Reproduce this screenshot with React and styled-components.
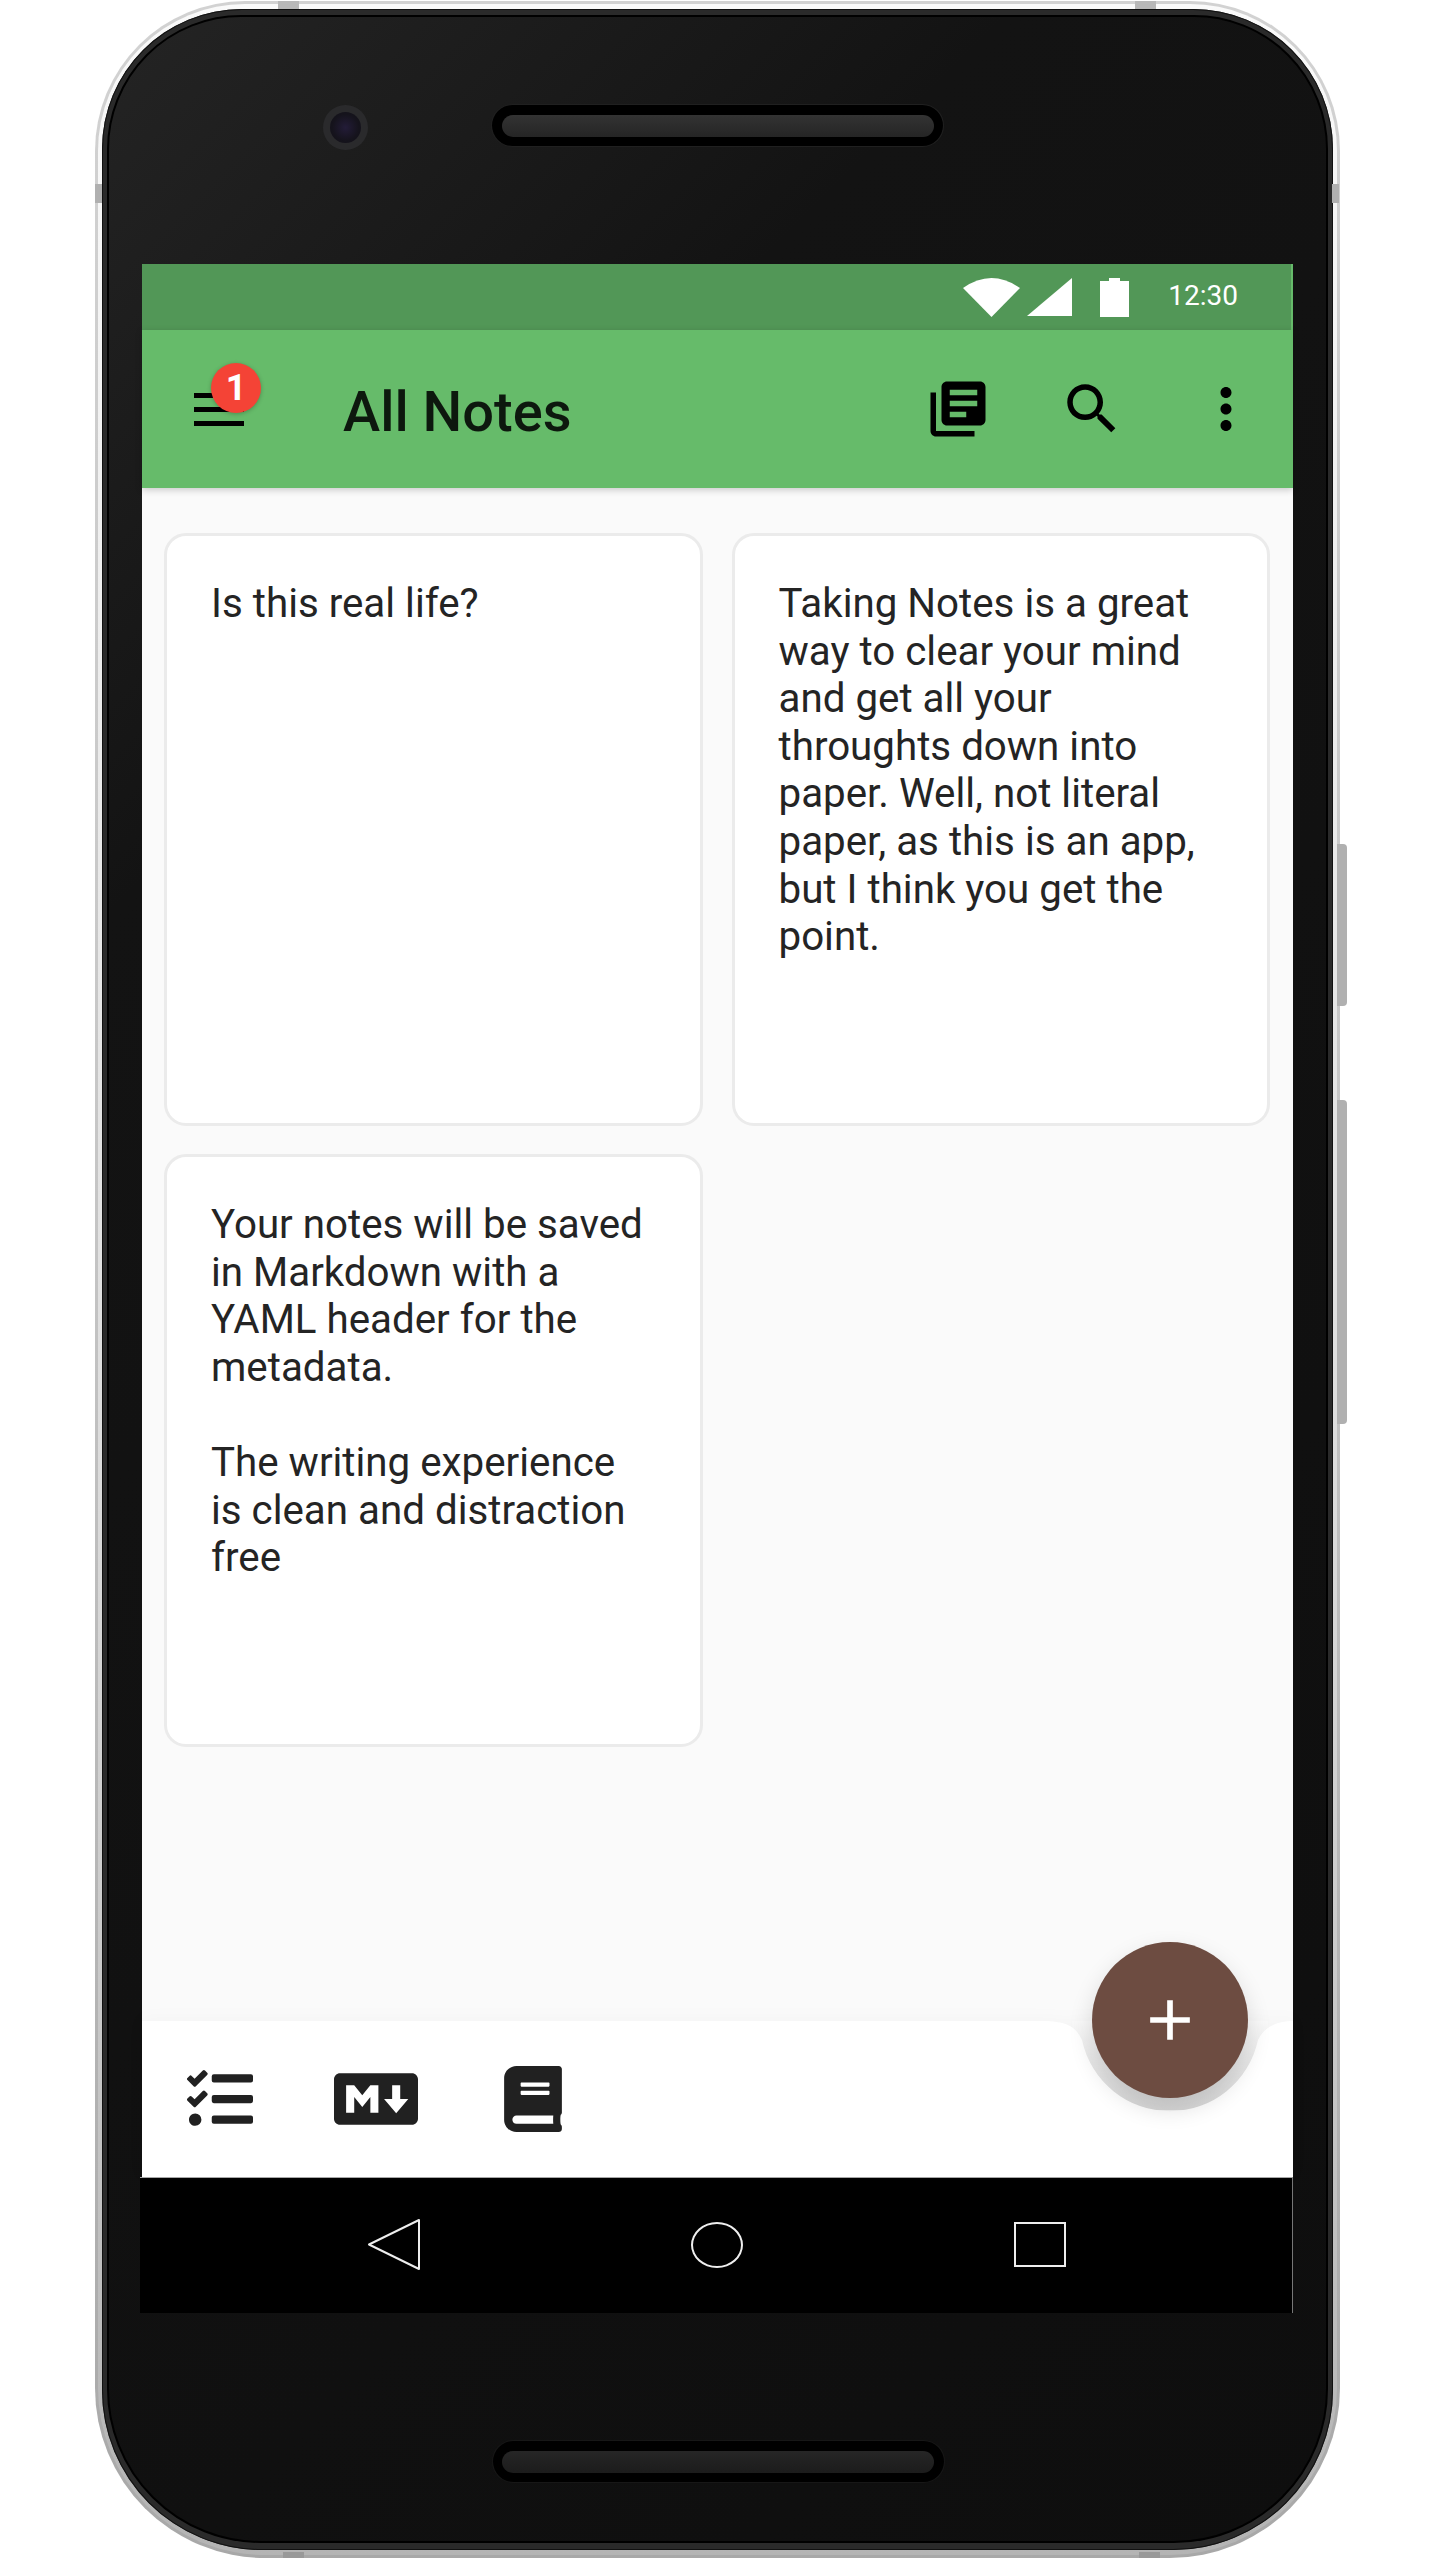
import React from 'react';
import styled, { createGlobalStyle } from 'styled-components';
import { FaTasks, FaMarkdown, FaBook } from 'react-icons/fa';

const GlobalStyle = createGlobalStyle`
  * { box-sizing: border-box; }
  html, body { margin: 0; padding: 0; background: #fff; }
  body { font-family: Roboto, "Liberation Sans", sans-serif; }
`;

const notes = [
  'Is this real life?',
  'Taking Notes is a great way to clear your mind and get all your throughts down into paper. Well, not literal paper, as this is an app, but I think you get the point.',
  'Your notes will be saved in Markdown with a YAML header for the metadata.\n\nThe writing experience is clean and distraction free',
];

const MaterialIcon = ({ d }) => (
  <IconSvg viewBox="0 0 24 24" aria-hidden="true">
    <path d={d} />
  </IconSvg>
);

const App = () => (
  <>
    <GlobalStyle />
    <Page>
      <Shell>
        <TopTab $left={183} />
        <TopTab $left={1040} />
        <BottomTab $left={188} />
        <BottomTab $left={1044} />
        <SideTab $side="left" />
        <SideTab $side="right" />
        <SideKey $top={843} $height={162} />
        <SideKey $top={1099} $height={324} />
        <ShellInner>
          <Rim>
            <Bezel>
              <BezelTop>
                <Camera><Lens /></Camera>
                <Speaker><Grille /></Speaker>
              </BezelTop>
              <Screen>
                <StatusBar>
                  <svg width="57" height="39" viewBox="0 0 57 39"><path d="M0 10Q28.5-10 57 10L28.5 39Z" fill="#fff" /></svg>
                  <SignalSvg width="45" height="38" viewBox="0 0 45 38"><path d="M0 38L45 0V38Z" fill="#fff" /></SignalSvg>
                  <BatterySvg width="29" height="39" viewBox="0 0 29 39"><path d="M9 0H20V3H29V39H0V3H9Z" fill="#fff" /></BatterySvg>
                  <Clock>12:30</Clock>
                </StatusBar>
                <AppBar>
                  <MenuButton>
                    <svg width="50" height="33" viewBox="0 0 50 33">
                      <path d="M0 0H50V5H0ZM0 14H50V19H0ZM0 28H50V33H0Z" />
                    </svg>
                    <Badge>1</Badge>
                  </MenuButton>
                  <Title>All Notes</Title>
                  <Actions>
                    <MaterialIcon d="M4 6H2v14c0 1.1.9 2 2 2h14v-2H4V6zm16-4H8c-1.1 0-2 .9-2 2v12c0 1.1.9 2 2 2h12c1.1 0 2-.9 2-2V4c0-1.1-.9-2-2-2zm-1 9H9V9h10v2zm-4 4H9v-2h6v2zm4-8H9V5h10v2z" />
                    <MaterialIcon d="M15.5 14h-.79l-.28-.27C15.41 12.59 16 11.11 16 9.5 16 5.91 13.09 3 9.5 3S3 5.91 3 9.5 5.91 16 9.5 16c1.61 0 3.09-.59 4.23-1.57l.27.28v.79l5 4.99L20.49 19l-4.99-5zm-6 0C7.01 14 5 11.99 5 9.5S7.01 5 9.5 5 14 7.01 14 9.5 11.99 14 9.5 14z" />
                    <MaterialIcon d="M12 8c1.1 0 2-.9 2-2s-.9-2-2-2-2 .9-2 2 .9 2 2 2zm0 2c-1.1 0-2 .9-2 2s.9 2 2 2 2-.9 2-2-.9-2-2-2zm0 6c-1.1 0-2 .9-2 2s.9 2 2 2 2-.9 2-2-.9-2-2-2z" />
                  </Actions>
                </AppBar>
                <Main>
                  <NoteGrid>
                    {notes.map((note) => (
                      <NoteCard key={note}>{note}</NoteCard>
                    ))}
                  </NoteGrid>
                </Main>
                <BottomBar>
                  <BarShape width="1151" height="156" viewBox="0 0 1151 156">
                    <defs>
                      <linearGradient id="notchShade" x1="0" y1="0" x2="0" y2="1">
                        <stop offset="0" stopColor="#f9f9f9" />
                        <stop offset="0.45" stopColor="#e8e8e8" />
                        <stop offset="1" stopColor="#d8d8d8" />
                      </linearGradient>
                    </defs>
                    <path d="M930 0H1126V89H930Z" fill="url(#notchShade)" />
                    <path d="M0 0H900C925 0 934 6 940 19A90 90 0 0 0 1116 19C1122 6 1135 0 1151 0V156H0Z" fill="#fff" />
                  </BarShape>
                  <BarButton><FaTasks size={66} /></BarButton>
                  <BarButton><FaMarkdown size={84} /></BarButton>
                  <BarButton $nudge={1}><FaBook size={66} /></BarButton>
                  <Fab>
                    <FabIcon viewBox="0 0 24 24"><path d="M19 13h-6v6h-2v-6H5v-2h6V5h2v6h6v2z" /></FabIcon>
                  </Fab>
                </BottomBar>
                <NavBar>
                  <svg width="54" height="53" viewBox="0 0 54 53">
                    <path d="M52 2V51L2 26.5Z" fill="none" stroke="#eee" strokeWidth="2" strokeLinejoin="round" />
                  </svg>
                  <HomeKey />
                  <RecentKey />
                </NavBar>
              </Screen>
              <BezelBottom>
                <Speaker $dim><Grille $dim /></Speaker>
              </BezelBottom>
            </Bezel>
          </Rim>
        </ShellInner>
      </Shell>
    </Page>
  </>
);

const Page = styled.div`
  width: 1440px;
  height: 2560px;
  padding: 1px 0 0 95px;
  overflow: hidden;
  background: #fff;
`;

const Shell = styled.div`
  position: relative;
  width: 1245px;
  padding: 3px;
  border-radius: 150px 150px 170px 170px;
  background: linear-gradient(to bottom, #d2d2d2 0%, #c6c6c6 45%, #a8a8a8 100%);
`;

const ShellInner = styled.div`
  padding: 5px 4px;
  border-radius: 147px 147px 167px 167px;
  background: linear-gradient(to bottom, #fafafa 0%, #dedede 55%, #b4b4b4 100%);
`;

const Rim = styled.div`
  padding: 6px 5px 7px;
  border-radius: 140px 140px 160px 160px;
  background: #2a2a2a;
  box-shadow: inset 0 0 0 1px #111;
`;

const Bezel = styled.div`
  padding: 0 32px 0 33px;
  border: 2px solid #000;
  border-radius: 134px 134px 154px 154px;
  background: linear-gradient(135deg, #242424 0%, #131313 24%, #0e0e0e 100%);
`;

const BezelTop = styled.div`
  display: flex;
  align-items: flex-start;
  gap: 124px;
  height: 247px;
  padding: 88px 0 0 181px;
`;

const BezelBottom = styled.div`
  display: flex;
  justify-content: center;
  height: 228px;
  padding-top: 128px;
`;

const Camera = styled.div`
  display: flex;
  align-items: center;
  justify-content: center;
  width: 45px;
  height: 45px;
  border-radius: 50%;
  background: #2a2a2c;
`;

const Lens = styled.div`
  width: 31px;
  height: 31px;
  border-radius: 50%;
  background: radial-gradient(circle, #231c38 0%, #15131c 60%, #121118 100%);
`;

const Speaker = styled.div`
  display: flex;
  align-items: center;
  justify-content: center;
  width: 451px;
  height: 41px;
  border-radius: 21px;
  background: #000;
  box-shadow: 0 0 0 1px ${(p) => (p.$dim ? '#171717' : '#202020')};
`;

const Grille = styled.div`
  width: 432px;
  height: 22px;
  border-radius: 11px;
  background: ${(p) =>
    p.$dim
      ? 'linear-gradient(to bottom, #262626, #1c1c1c)'
      : 'linear-gradient(to bottom, #333, #252525)'};
`;

const Screen = styled.div`
  display: flex;
  flex-direction: column;
  width: 1151px;
  height: 2049px;
`;

const StatusBar = styled.div`
  display: flex;
  align-items: center;
  justify-content: flex-end;
  height: 66px;
  padding-right: 53px;
  border-right: 2px solid #66bb6a;
  background: #529757;
`;

const SignalSvg = styled.svg`
  margin-left: 7px;
`;

const BatterySvg = styled.svg`
  margin-left: 28px;
`;

const Clock = styled.span`
  margin-left: 39px;
  padding-bottom: 4px;
  color: #fff;
  font-size: 28px;
`;

const AppBar = styled.header`
  position: relative;
  z-index: 1;
  display: flex;
  align-items: center;
  height: 158px;
  padding: 0 34px 0 52px;
  background: #66bb6a;
  box-shadow: 0 2px 7px rgba(0, 0, 0, 0.2);
`;

const MenuButton = styled.div`
  position: relative;
  display: flex;
  width: 50px;
  height: 33px;
`;

const Badge = styled.span`
  position: absolute;
  left: 17px;
  top: -30px;
  display: flex;
  align-items: center;
  justify-content: center;
  width: 50px;
  height: 50px;
  border-radius: 50%;
  background: #f44336;
  box-shadow: 0 1px 4px rgba(0, 0, 0, 0.25);
  color: #fff;
  font-size: 36px;
  font-weight: 700;
`;

const Title = styled.h1`
  margin: 0 0 0 99px;
  padding-top: 6px;
  color: rgba(0, 0, 0, 0.87);
  font-size: 56px;
  font-weight: 500;
`;

const Actions = styled.div`
  display: flex;
  gap: 68px;
  margin-left: auto;
`;

const IconSvg = styled.svg`
  display: block;
  width: 66px;
  height: 66px;
  fill: #000;
`;

const Main = styled.main`
  flex: 1;
  padding: 45px 23px 0 22px;
  background: #fafafa;
`;

const NoteGrid = styled.div`
  display: grid;
  grid-template-columns: 1fr 1fr;
  grid-auto-rows: 593px;
  gap: 28px 29px;
`;

const NoteCard = styled.article`
  padding: 44px 49px 0 44px;
  border: 3px solid #ebebeb;
  border-radius: 22px;
  background: #fff;
  color: #242424;
  font-size: 40.3px;
  line-height: 47.6px;
  white-space: pre-line;
`;

const BottomBar = styled.nav`
  position: relative;
  z-index: 2;
  display: flex;
  align-items: center;
  height: 156px;
  background: #fafafa;
`;

const BarShape = styled.svg`
  position: absolute;
  left: 0;
  top: 0;
  overflow: visible;
  filter: drop-shadow(0 -2px 8px rgba(0, 0, 0, 0.025));
`;

const BarButton = styled.div`
  position: relative;
  left: ${(p) => p.$nudge || 0}px;
  display: flex;
  align-items: center;
  justify-content: center;
  width: 156px;
  color: #212121;
`;

const Fab = styled.div`
  position: absolute;
  left: 950px;
  top: -79px;
  display: flex;
  align-items: center;
  justify-content: center;
  width: 156px;
  height: 156px;
  border-radius: 50%;
  background: #6d4c41;
  box-shadow: 0 10px 24px rgba(0, 0, 0, 0.14);
`;

const FabIcon = styled.svg`
  width: 68px;
  height: 68px;
  fill: #fff;
`;

const NavBar = styled.div`
  position: relative;
  display: flex;
  align-items: center;
  height: 136px;
  margin-left: -2px;
  padding: 0 0 2px 227px;
  border-top: 1px solid #aaa;
  border-right: 1px solid #777;
  background: #000;
`;

const HomeKey = styled.div`
  width: 52px;
  height: 46px;
  margin-left: 270px;
  border: 2px solid #eee;
  border-radius: 50%;
`;

const RecentKey = styled.div`
  width: 52px;
  height: 45px;
  margin-left: 271px;
  border: 2px solid #eee;
`;

const TopTab = styled.div`
  position: absolute;
  top: 0;
  left: ${(p) => p.$left}px;
  width: 21px;
  height: 8px;
  background: #b8b8b8;
`;

const BottomTab = styled.div`
  position: absolute;
  bottom: 0;
  left: ${(p) => p.$left}px;
  width: 21px;
  height: 6px;
  background: #999;
`;

const SideTab = styled.div`
  position: absolute;
  top: 183px;
  ${(p) => (p.$side === 'left' ? 'left: 0;' : 'right: 1px;')}
  width: 7px;
  height: 19px;
  background: #b0b0b0;
`;

const SideKey = styled.div`
  position: absolute;
  right: -7px;
  top: ${(p) => p.$top}px;
  width: 10px;
  height: ${(p) => p.$height}px;
  border-radius: 0 4px 4px 0;
  background: #b0b0b0;
`;

export default App;
